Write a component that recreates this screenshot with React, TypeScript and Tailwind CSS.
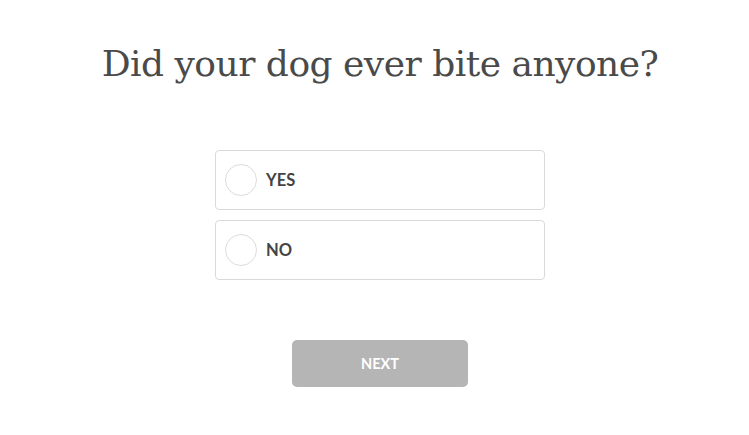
const options = ['YES', 'NO']

export default function App() {
  return (
    <div className="min-h-[435px] w-full bg-white flex flex-col items-center pt-[40px] pl-[11px]">
      <h1 className="text-[36px] leading-[48px] text-[#4a4a4a] font-['DejaVu_Serif',serif] tracking-[-0.5px]">
        Did your dog ever bite anyone?
      </h1>
      <div className="mt-[62px] flex flex-col gap-[10px] w-[330px]">
        {options.map((label) => (
          <label
            key={label}
            className="h-[60px] flex items-center rounded-[4px] border border-[#d9d9d9] bg-white pl-[9px] cursor-pointer"
          >
            <span className="w-[32px] h-[32px] rounded-full border border-[#dcdcdc] shrink-0" />
            <span className="ml-[9px] text-[16.5px] font-bold text-[#444] font-['Lato',sans-serif]">
              {label}
            </span>
          </label>
        ))}
      </div>
      <button
        disabled
        className="mt-[60px] w-[176px] h-[47px] rounded-[5px] bg-[#b5b5b5] text-white text-[14.5px] font-bold font-['Lato',sans-serif]"
      >
        NEXT
      </button>
    </div>
  )
}
